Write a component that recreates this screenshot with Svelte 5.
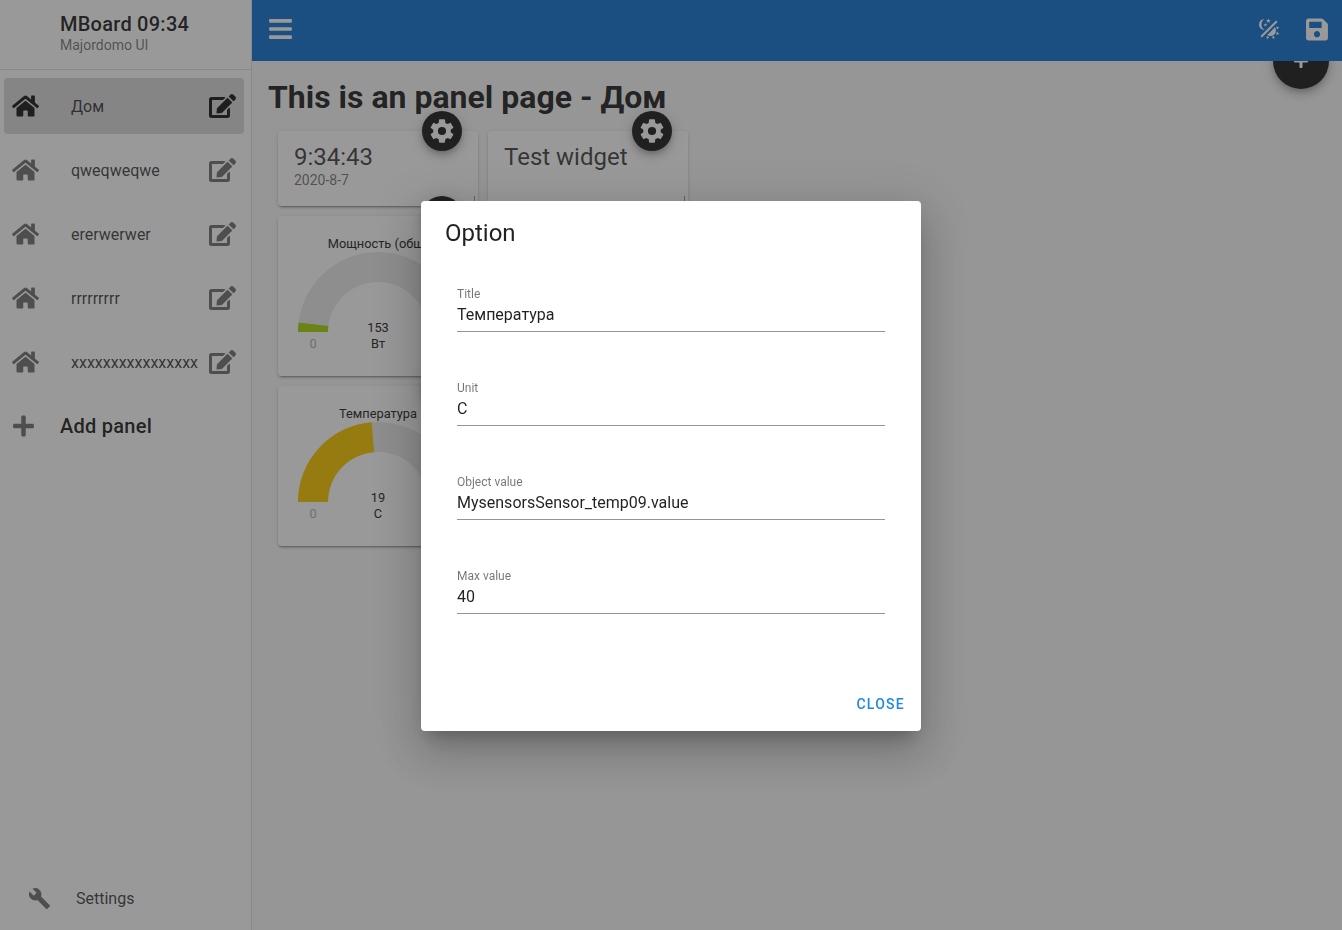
<script lang="ts">
  const HOME =
    "M280.37 148.26L96 300.11V464a16 16 0 0 0 16 16l112.06-.29a16 16 0 0 0 15.92-16V368a16 16 0 0 1 16-16h64a16 16 0 0 1 16 16v95.64a16 16 0 0 0 16 16.05L464 480a16 16 0 0 0 16-16V300L295.67 148.26a12.19 12.19 0 0 0-15.3 0zM571.6 251.47L488 182.56V44.05a12 12 0 0 0-12-12h-56a12 12 0 0 0-12 12v72.61L318.47 43a48 48 0 0 0-61 0L4.34 251.47a12 12 0 0 0-1.6 16.9l25.5 31A12 12 0 0 0 45.15 301l235.22-193.74a12.19 12.19 0 0 1 15.3 0L530.9 301a12 12 0 0 0 16.9-1.6l25.5-31a12 12 0 0 0-1.7-16.93z";
  const EDIT =
    "M402.6 83.2l90.2 90.2c3.8 3.8 3.8 10 0 13.8L274.4 405.6l-92.8 10.3c-12.4 1.4-22.9-9.1-21.5-21.5l10.3-92.8L388.8 83.2c3.8-3.8 10-3.8 13.8 0zm162-22.9l-48.8-48.8c-15.2-15.2-39.9-15.2-55.2 0l-35.4 35.4c-3.8 3.8-3.8 10 0 13.8l90.2 90.2c3.8 3.8 10 3.8 13.8 0l35.4-35.4c15.2-15.3 15.2-40 0-55.2zM384 346.2V448H64V128h229.8c3.2 0 6.2-1.3 8.5-3.5l40-40c7.6-7.6 2.2-20.5-8.5-20.5H48C21.5 64 0 85.5 0 112v352c0 26.5 21.5 48 48 48h352c26.5 0 48-21.5 48-48V306.2c0-10.7-12.9-16-20.5-8.5l-40 40c-2.2 2.3-3.5 5.3-3.5 8.5z";
  const COG =
    "M12,15.5A3.5,3.5 0 0,1 8.5,12A3.5,3.5 0 0,1 12,8.5A3.5,3.5 0 0,1 15.5,12A3.5,3.5 0 0,1 12,15.5M19.43,12.97C19.47,12.65 19.5,12.33 19.5,12C19.5,11.67 19.47,11.34 19.43,11L21.54,9.37C21.73,9.22 21.78,8.95 21.66,8.73L19.66,5.27C19.54,5.05 19.27,4.96 19.05,5.05L16.56,6.05C16.04,5.66 15.5,5.32 14.87,5.07L14.5,2.42C14.46,2.18 14.25,2 14,2H10C9.75,2 9.54,2.18 9.5,2.42L9.13,5.07C8.5,5.32 7.96,5.66 7.44,6.05L4.95,5.05C4.73,4.96 4.46,5.05 4.34,5.27L2.34,8.73C2.21,8.95 2.27,9.22 2.46,9.37L4.57,11C4.53,11.34 4.5,11.67 4.5,12C4.5,12.33 4.53,12.65 4.57,12.97L2.46,14.63C2.27,14.78 2.21,15.05 2.34,15.27L4.34,18.73C4.46,18.95 4.73,19.03 4.95,18.95L7.44,17.94C7.96,18.34 8.5,18.68 9.13,18.93L9.5,21.58C9.54,21.82 9.75,22 10,22H14C14.25,22 14.46,21.82 14.5,21.58L14.87,18.93C15.5,18.67 16.04,18.34 16.56,17.94L19.05,18.95C19.27,19.03 19.54,18.95 19.66,18.73L21.66,15.27C21.78,15.05 21.73,14.78 21.54,14.63L19.43,12.97Z";
  const PLUS =
    "M416 208H272V64c0-17.67-14.33-32-32-32h-32c-17.67 0-32 14.33-32 32v144H32c-17.67 0-32 14.33-32 32v32c0 17.67 14.33 32 32 32h144v144c0 17.67 14.33 32 32 32h32c17.67 0 32-14.33 32-32V304h144c17.67 0 32-14.33 32-32v-32c0-17.67-14.33-32-32-32z";

  const panels = [
    { name: "Дом", active: true },
    { name: "qweqweqwe" },
    { name: "ererwerwer" },
    { name: "rrrrrrrrr" },
    { name: "xxxxxxxxxxxxxxxx" },
  ];

  const gauges = [
    { title: "Мощность (общ)", value: 153, max: 4000, unit: "Вт", color: "#a9d70b" },
    { title: "Температура", value: 19, max: 40, unit: "C", color: "#f9c802" },
  ];

  const fields = [
    { label: "Title", value: "Температура" },
    { label: "Unit", value: "C" },
    { label: "Object value", value: "MysensorsSensor_temp09.value" },
    { label: "Max value", value: "40" },
  ];

  // half ring from the left end up to the given fraction
  function arc(f: number) {
    const a = Math.PI * (1 - f);
    const cx = 100;
    const cy = 116;
    const x1 = cx + 80 * Math.cos(a);
    const y1 = cy - 80 * Math.sin(a);
    const x2 = cx + 50 * Math.cos(a);
    const y2 = cy - 50 * Math.sin(a);
    return `M20 ${cy}A80 80 0 0 1 ${x1} ${y1}L${x2} ${y2}A50 50 0 0 0 50 ${cy}Z`;
  }
</script>

<div class="layout">
  <nav class="sidebar">
    <header class="brand">
      <div class="brand-title">MBoard 09:34</div>
      <div class="brand-sub">Majordomo UI</div>
    </header>

    <ul class="panels">
      {#each panels as panel}
        <li class="panel" class:active={panel.active}>
          <svg class="home" viewBox="0 0 576 512"><path d={HOME} /></svg>
          <span class="panel-name">{panel.name}</span>
          <svg class="edit" viewBox="0 0 576 512"><path d={EDIT} /></svg>
        </li>
      {/each}
    </ul>

    <div class="add-panel">
      <svg class="plus" viewBox="0 0 448 512"><path d={PLUS} /></svg>
      <span>Add panel</span>
    </div>

    <div class="settings">
      <svg class="wrench" viewBox="0 0 24 24">
        <path d="M22.7,19L13.6,9.9C14.5,7.6 14,4.9 12.1,3C10.1,1 7.1,0.6 4.7,1.7L9,6L6,9L1.6,4.7C0.4,7.1 0.9,10.1 2.9,12.1C4.8,14 7.5,14.5 9.8,13.6L18.9,22.7C19.3,23.1 19.9,23.1 20.3,22.7L22.6,20.4C23.1,20 23.1,19.3 22.7,19Z" />
      </svg>
      <span>Settings</span>
    </div>
  </nav>

  <div class="content">
    <header class="appbar">
      <svg class="bars" viewBox="0 0 448 512">
        <path d="M16 132h416c8.837 0 16-7.163 16-16V76c0-8.837-7.163-16-16-16H16C7.163 60 0 67.163 0 76v40c0 8.837 7.163 16 16 16zm0 160h416c8.837 0 16-7.163 16-16v-40c0-8.837-7.163-16-16-16H16c-8.837 0-16 7.163-16 16v40c0 8.837 7.163 16 16 16zm0 160h416c8.837 0 16-7.163 16-16v-40c0-8.837-7.163-16-16-16H16c-8.837 0-16 7.163-16 16v40c0 8.837 7.163 16 16 16z" />
      </svg>
      <div class="appbar-actions">
        <svg class="theme" viewBox="0 0 24 24">
          <path d="M7.5,2C5.71,3.15 4.5,5.18 4.5,7.5C4.5,9.82 5.71,11.85 7.53,13C4.46,13 2,10.54 2,7.5A5.5,5.5 0 0,1 7.5,2M19.07,3.5L20.5,4.93L4.93,20.5L3.5,19.07L19.07,3.5M12.89,5.93L11.41,5L9.97,6L10.39,4.3L9,3.24L10.75,3.12L11.33,1.47L12,3.1L13.73,3.13L12.38,4.26L12.89,5.93M9.59,9.54L8.43,8.81L7.31,9.59L7.65,8.27L6.56,7.44L7.92,7.35L8.37,6.06L8.88,7.33L10.24,7.35L9.19,8.23L9.59,9.54M19,13.5A5.5,5.5 0 0,1 13.5,19C12.28,19 11.15,18.6 10.24,17.93L17.93,10.24C18.6,11.15 19,12.28 19,13.5M14.6,20.08L17.37,18.93L17.13,22.28L14.6,20.08M18.93,17.38L20.08,14.61L22.28,17.15L18.93,17.38M20.08,12.42L18.94,9.64L22.28,9.88L20.08,12.42M9.63,18.93L12.4,20.08L9.87,22.27L9.63,18.93Z" />
        </svg>
        <svg class="save" viewBox="0 0 448 512">
          <path d="M433.941 129.941l-83.882-83.882A48 48 0 0 0 316.118 32H48C21.49 32 0 53.49 0 80v352c0 26.51 21.49 48 48 48h352c26.51 0 48-21.49 48-48V163.882a48 48 0 0 0-14.059-33.941zM224 416c-35.346 0-64-28.654-64-64 0-35.346 28.654-64 64-64s64 28.654 64 64c0 35.346-28.654 64-64 64zm96-304.52V212c0 6.627-5.373 12-12 12H76c-6.627 0-12-5.373-12-12V108c0-6.627 5.373-12 12-12h228.52c3.183 0 6.235 1.264 8.485 3.515l3.48 3.48A11.996 11.996 0 0 1 320 111.48z" />
        </svg>
      </div>
    </header>

    <button class="fab-add" aria-label="Add widget">
      <svg viewBox="0 0 448 512"><path d={PLUS} /></svg>
    </button>

    <main class="page">
      <h1>This is an panel page - Дом</h1>

      <div class="widgets">
        <section class="card short">
          <span class="fab"><svg viewBox="0 0 24 24"><path d={COG} /></svg></span>
          <div class="card-title">9:34:43</div>
          <div class="card-sub">2020-8-7</div>
        </section>
        <section class="card short">
          <span class="fab"><svg viewBox="0 0 24 24"><path d={COG} /></svg></span>
          <div class="card-title">Test widget</div>
        </section>

        {#each gauges as g}
          <section class="card tall">
            <span class="fab"><svg viewBox="0 0 24 24"><path d={COG} /></svg></span>
            <svg class="gauge" viewBox="0 0 200 160">
              <text class="g-title" x="100" y="32">{g.title}</text>
              <path d={arc(1)} fill="#edebeb" />
              <path d={arc(g.value / g.max)} fill={g.color} />
              <text class="g-value" x="100" y="116">{g.value}</text>
              <text class="g-value" x="100" y="132">{g.unit}</text>
              <text class="g-min" x="35" y="132">0</text>
              <text class="g-min" x="165" y="132">{g.max}</text>
            </svg>
          </section>
          <div></div>
        {/each}
      </div>
    </main>
  </div>
</div>

<div class="overlay"></div>

<div class="dialog">
  <h2>Option</h2>
  <div class="fields">
    {#each fields as field}
      <label class="field">
        <span class="field-label">{field.label}</span>
        <input value={field.value} />
      </label>
    {/each}
  </div>
  <div class="dialog-actions">
    <button class="close">Close</button>
  </div>
</div>

<style>
  :global(body) {
    background: #fafafa;
    overflow: hidden;
    color: rgba(0, 0, 0, 0.87);
    font-family: Roboto, "Liberation Sans", sans-serif;
  }

  svg {
    display: block;
    fill: currentColor;
  }

  .layout {
    display: flex;
    height: 930px;
  }

  .sidebar {
    display: flex;
    flex-direction: column;
    flex: none;
    box-sizing: border-box;
    border-right: 1px solid rgba(0, 0, 0, 0.12);
    background: #fff;
    width: 252px;
  }

  .brand {
    box-sizing: border-box;
    border-bottom: 1px solid rgba(0, 0, 0, 0.12);
    padding: 12px 0 0 60px;
    height: 70px;
  }

  .brand-title {
    font-weight: 500;
    font-size: 20px;
    line-height: 24px;
    letter-spacing: 0.0125em;
  }

  .brand-sub {
    color: rgba(0, 0, 0, 0.54);
    font-size: 14px;
    line-height: 18px;
  }

  .panels {
    margin: 8px 0 0;
    padding: 0;
    list-style: none;
  }

  .panel {
    display: flex;
    align-items: center;
    margin: 0 7px 8px 4px;
    border-radius: 4px;
    padding: 0 8px;
    height: 56px;
    color: rgba(0, 0, 0, 0.54);
  }

  .panel.active {
    background: #dadada;
    color: rgba(0, 0, 0, 0.87);
  }

  .home {
    flex: none;
    width: 27px;
    height: 24px;
  }

  .panel-name {
    flex: 1;
    margin-left: 32px;
    color: rgba(0, 0, 0, 0.74);
    font-size: 16px;
    white-space: nowrap;
  }

  .edit {
    flex: none;
    width: 27px;
    height: 24px;
  }

  .add-panel {
    display: flex;
    align-items: center;
    gap: 26px;
    padding-left: 13px;
    height: 56px;
    font-weight: 500;
    font-size: 20px;
    letter-spacing: 0.0125em;
  }

  .plus {
    width: 21px;
    height: 24px;
    color: rgba(0, 0, 0, 0.54);
  }

  .settings {
    display: flex;
    align-items: center;
    gap: 25px;
    margin-top: auto;
    padding: 0 0 4px 28px;
    height: 56px;
    color: rgba(0, 0, 0, 0.74);
    font-size: 16px;
  }

  .wrench {
    width: 23px;
    height: 23px;
    color: rgba(0, 0, 0, 0.54);
  }

  .content {
    position: relative;
    flex: 1;
    min-width: 0;
  }

  .appbar {
    display: flex;
    position: relative;
    justify-content: space-between;
    align-items: center;
    z-index: 2;
    box-sizing: border-box;
    background: #1976d2;
    padding: 0 14px 3px 17px;
    height: 61px;
    color: #fff;
  }

  .bars {
    width: 23px;
    height: 26px;
  }

  .appbar-actions {
    display: flex;
    align-items: center;
    gap: 25px;
  }

  .theme {
    width: 24px;
    height: 24px;
  }

  .save {
    width: 22px;
    height: 25px;
  }

  .fab-add {
    display: flex;
    position: absolute;
    top: 33px;
    right: 13px;
    justify-content: center;
    align-items: center;
    z-index: 1;
    border: none;
    border-radius: 50%;
    background: #212121;
    box-shadow: 0 3px 5px -1px rgba(0, 0, 0, 0.2), 0 6px 10px rgba(0, 0, 0, 0.14), 0 1px 18px rgba(0, 0, 0, 0.12);
    padding: 0;
    width: 56px;
    height: 56px;
    color: #fff;
  }

  .fab-add svg {
    width: 14px;
    height: 16px;
  }

  .page {
    padding: 16px 16px 0;
  }

  h1 {
    margin: 0 0 14px;
    font-weight: 700;
    font-size: 32px;
    line-height: 40px;
  }

  .widgets {
    display: grid;
    grid-template-columns: 200px 200px;
    gap: 10px;
    margin-left: 10px;
  }

  .card {
    position: relative;
    border-radius: 4px;
    background: #fff;
    box-shadow: 0 3px 1px -2px rgba(0, 0, 0, 0.2), 0 2px 2px rgba(0, 0, 0, 0.14), 0 1px 5px rgba(0, 0, 0, 0.12);
  }

  .card::after {
    position: absolute;
    right: 3px;
    bottom: 2px;
    border-right: 1px solid rgba(0, 0, 0, 0.4);
    border-bottom: 1px solid rgba(0, 0, 0, 0.4);
    width: 7px;
    height: 7px;
    content: "";
  }

  .short {
    box-sizing: border-box;
    padding: 12px 16px 0;
    height: 75px;
  }

  .tall {
    height: 160px;
  }

  .fab {
    display: flex;
    position: absolute;
    top: -20px;
    right: 16px;
    justify-content: center;
    align-items: center;
    z-index: 1;
    border-radius: 50%;
    background: #212121;
    box-shadow: 0 3px 5px -1px rgba(0, 0, 0, 0.2), 0 6px 10px rgba(0, 0, 0, 0.14), 0 1px 18px rgba(0, 0, 0, 0.12);
    width: 40px;
    height: 40px;
    color: #fff;
  }

  .fab svg {
    width: 28px;
    height: 28px;
  }

  .card-title {
    color: rgba(0, 0, 0, 0.74);
    font-size: 24px;
    line-height: 28px;
  }

  .card-sub {
    color: rgba(0, 0, 0, 0.54);
    font-size: 14px;
    line-height: 18px;
  }

  .gauge {
    width: 200px;
    height: 160px;
  }

  .gauge text {
    font-size: 12.8px;
    text-anchor: middle;
  }

  .g-title,
  .g-value {
    fill: #2a2a2a;
  }

  .g-min {
    fill: #b3b3b3;
  }

  .overlay {
    position: fixed;
    opacity: 0.46;
    z-index: 10;
    background: #212121;
    inset: 0;
  }

  .dialog {
    display: flex;
    position: fixed;
    top: 201px;
    left: 421px;
    flex-direction: column;
    z-index: 11;
    box-sizing: border-box;
    border-radius: 4px;
    background: #fff;
    box-shadow: 0 11px 15px -7px rgba(0, 0, 0, 0.2), 0 24px 38px 3px rgba(0, 0, 0, 0.14), 0 9px 46px 8px rgba(0, 0, 0, 0.12);
    width: 500px;
    height: 530px;
  }

  h2 {
    margin: 0;
    padding: 16px 24px 0;
    font-weight: 400;
    font-size: 24px;
    line-height: 32px;
  }

  .fields {
    display: flex;
    flex-direction: column;
    gap: 30px;
    padding: 38px 36px 0;
  }

  .field {
    display: flex;
    flex-direction: column;
    height: 64px;
  }

  .field-label {
    color: rgba(0, 0, 0, 0.54);
    font-size: 12px;
    line-height: 14px;
  }

  input {
    box-sizing: border-box;
    outline: none;
    border: none;
    border-bottom: 1px solid rgba(0, 0, 0, 0.42);
    background: none;
    padding: 0 0 4px;
    width: 100%;
    height: 31px;
    color: rgba(0, 0, 0, 0.87);
    font-size: 16px;
    font-family: inherit;
  }

  .dialog-actions {
    display: flex;
    justify-content: flex-end;
    margin-top: auto;
    padding: 0 16px 17px;
  }

  .close {
    border: none;
    background: none;
    padding: 0;
    color: #1e88e5;
    font-weight: 500;
    font-size: 14px;
    line-height: 20px;
    letter-spacing: 1.25px;
    text-transform: uppercase;
    font-family: inherit;
  }
</style>
